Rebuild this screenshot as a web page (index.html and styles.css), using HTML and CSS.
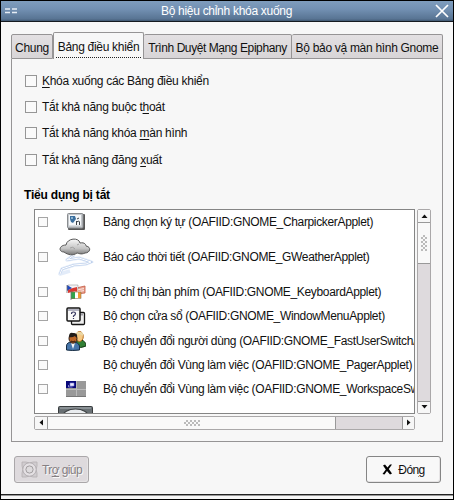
FILE: index.html
```html
<!DOCTYPE html>
<html lang="vi">
<head>
<meta charset="utf-8">
<title>Bộ hiệu chỉnh khóa xuống</title>
<link rel="stylesheet" href="styles.css">
</head>
<body>
<div class="window">
  <header class="titlebar">
    <svg class="menu" width="13" height="6" viewBox="0 0 13 6"><path d="M0 1h5M7 1h5M0 4.500h5M7 4.500h5" stroke="#e6edf5" stroke-width="1.300"/></svg>
    <h1><span>Bộ hiệu chỉnh khóa xuống</span></h1>
    <svg class="close" width="14" height="14" viewBox="0 0 14 14"><path d="M1 1 13 13M13 1 1 13" stroke="#fff" stroke-width="1.700"/></svg>
  </header>
  <main class="content">
    <nav class="tabs">
      <div class="tab t1"><span>Chung</span></div>
      <div class="tab t2 active"><span>Bảng điều khiển</span></div>
      <div class="tab t3"><span>Trình Duyệt Mạng Epiphany</span></div>
      <div class="tab t4"><span>Bộ bảo vậ màn hình Gnome</span></div>
    </nav>
    <section class="panel">
      <div class="option"><i class="box"></i><span><u>K</u>hóa xuống các Bảng điều khiển</span></div>
      <div class="option"><i class="box"></i><span>Tắt khả năng buộc t<u>h</u>oát</span></div>
      <div class="option"><i class="box"></i><span>Tắt khả năng khóa <u>m</u>àn hình</span></div>
      <div class="option"><i class="box"></i><span>Tắt khả năng đăng <u>x</u>uất</span></div>
      <h2><span>Tiểu dụng bị tắt</span></h2>
      <div class="scroller">
        <div class="list">
          <div class="row"><i class="box small"></i><div class="icon">
            <svg width="18" height="17" viewBox="0 0 18 17"><rect x="1" y="1" width="17" height="16" rx="1" fill="#555"/><rect x=".5" y=".5" width="15.500" height="14.500" rx="1" fill="#c4c8cc" stroke="#8a8d90"/><rect x="2" y="2" width="12" height="10.500" fill="#f5f7f9"/><path d="M3 3h5l1 3-3 4-2-1-1-3z" fill="#3b6f9e"/><path d="M4 4h2v2H4z" fill="#8db5d2"/><path d="M9.500 12V8M9.500 9q3-2 3 0v3M10 6l2-1" stroke="#3c4248" fill="none"/></svg>
          </div><span>Bảng chọn ký tự (OAFIID:GNOME_CharpickerApplet)</span></div>
          <div class="row tall"><i class="box small"></i><div class="icon">
            <svg width="36" height="38" viewBox="0 0 36 38"><defs><linearGradient id="cloud" x2="0" y2="1"><stop offset="0" stop-color="#f8f8f8"/><stop offset=".6" stop-color="#c4c4c4"/><stop offset="1" stop-color="#777"/></linearGradient></defs><path d="M16 17 9 22 21 20 33 24 28 26 16 27 4 31 2 36 12 33" fill="none" stroke="#e3ecf9" stroke-width="3.500" stroke-linejoin="round"/><path d="M16 17 9 22 21 20 33 24 28 26 16 27 4 31 2 36" fill="none" stroke="#b9ccea" stroke-width="2"/><path d="M16 17 9 22 21 20 33 24 28 26 16 27 4 31 2 36" fill="none" stroke="#fff" stroke-width="1"/><path d="M6 14C0 14 1 7 8 7c1-7 13-8 14-2 5-1 6 2 6 3 6 1 4 7-1 7-4 2-7 0-8 0-4 3-9 2-13-1z" fill="url(#cloud)" stroke="#585858"/><path d="M12 10q3-2 5 1M21 6l-2 1" fill="none" stroke="#949494" stroke-width=".8"/></svg>
          </div><span>Báo cáo thời tiết (OAFIID:GNOME_GWeatherApplet)</span></div>
          <div class="row"><i class="box small"></i><div class="icon">
            <svg width="20" height="16" viewBox="0 0 20 16"><path d="M10 4 19 2v7l-9 1z" fill="#e9a492" stroke="#c3573f" stroke-width=".8"/><path d="M11 6 18 4.500M11 8l7-1.500" stroke="#fff" stroke-width=".7"/><path d="M2 1h10v4H2z" fill="#f4f4f6" stroke="#888" stroke-width=".5"/><path d="M1 1 6 4 1 7z" fill="#214ac0"/><path d="M2 9V6l5-2 4-1v4L6 8z" fill="#d83832"/><path d="M5 8h4v7H5z" fill="#30a44b"/><path d="M9 8h3v7H9z" fill="#fff"/><path d="M12 8h3v6h-3z" fill="#f19b31"/><path d="M5 8h10v6.500H5" fill="none" stroke="#8a7350" stroke-width=".6"/><path d="M1 1v8M5 7v9" stroke="#727272" stroke-width=".8"/></svg>
          </div><span>Bộ chỉ thị bàn phím (OAFIID:GNOME_KeyboardApplet)</span></div>
          <div class="row"><i class="box small"></i><div class="icon">
            <svg width="20" height="20" viewBox="0 0 20 20"><rect x="5.500" y="6.500" width="13" height="12" rx="1" fill="#eee" stroke="#151515" stroke-width="1.300"/><path d="M7 8.500h10" stroke="#a0a0a8" stroke-width="2"/><rect x="1" y="2" width="13" height="13" rx="1" fill="#f9f9f9" stroke="#151515" stroke-width="1.500"/><path d="M2 4h11" stroke="#9c9caf" stroke-width="1.500"/><path d="M5.500 8q0-2 2-2t2 1.500Q9.500 9 7.500 10v1M7.500 12v1" fill="none" stroke="#34345e" stroke-width="1.200"/></svg>
          </div><span>Bộ chọn cửa sổ (OAFIID:GNOME_WindowMenuApplet)</span></div>
          <div class="row"><i class="box small"></i><div class="icon">
            <svg width="20" height="20" viewBox="0 0 20 20"><path d="M9 15q0-6 6-6 5 1 5 6-5 3-11 0z" fill="#328035" stroke="#173b19"/><ellipse cx="13.500" cy="5.500" rx="3.800" ry="5" fill="#f5c983" stroke="#b66c1e"/><path d="M10 4q0-4 4-3 4 0 3 4-3-3-7-1z" fill="#ead7a5"/><path d="M.5 19v-4q0-4 6-4t7 4v4q-7 1-13 0z" fill="#4776aa" stroke="#172c42"/><path d="m5 12 2 6 2-6z" fill="#f8f8f8"/><ellipse cx="7" cy="7.500" rx="4" ry="4.700" fill="#bb6527" stroke="#2a1b13"/><path d="M3 6q0-5 4-4 5 0 4 4-1 1-2-1-3 2-6 1z" fill="#211c19"/><path d="M5 10q2 2 4 0" stroke="#301609" fill="none"/></svg>
          </div><span>Bộ chuyển đổi người dùng (OAFIID:GNOME_FastUserSwitchApplet)</span></div>
          <div class="row"><i class="box small"></i><div class="icon"></div><span>Bộ chuyển đổi Vùng làm việc (OAFIID:GNOME_PagerApplet)</span></div>
          <div class="row"><i class="box small"></i><div class="icon">
            <svg width="20" height="16" viewBox="0 0 20 16"><path d="M0 0h20v16H0z" fill="#999"/><path d="M10.500 0v16M0 8.500h20" stroke="#bbb"/><path d="M0 0h10v7H0z" fill="#080878"/><path d="M4 2h4v3H4z" fill="#eef" stroke="#8080e0" stroke-width=".6"/><path d="M2.500 4v2h4" stroke="#b0b0ef" fill="none" stroke-width=".7"/><path d="M0 15.500h20" stroke="#777"/></svg>
          </div><span>Bộ chuyển đổi Vùng làm việc (OAFIID:GNOME_WorkspaceSwitcherApplet)</span></div>
          <div class="row last"><i class="gap"></i><div class="icon">
            <svg width="35" height="20" viewBox="0 0 35 20"><rect x=".5" y=".5" width="34" height="19" rx="1" fill="#697074" stroke="#383c3e"/><path d="M2 2h31" stroke="#969da0" stroke-width="1.500"/><ellipse cx="17.500" cy="11" rx="13" ry="8" fill="#e9ecef" stroke="#3d4143" stroke-width="1.200"/></svg>
          </div></div>
        </div>
        <div class="vbar">
          <div class="arrow"><svg width="7" height="4" viewBox="0 0 7 4"><path d="M.5 4 3.500.500l3 3.500z" fill="#111"/></svg></div>
          <div class="vthumb"><i class="grip"></i></div>
          <div class="arrow end"><svg width="7" height="4" viewBox="0 0 7 4"><path d="M.5 0h6l-3 3.500z" fill="#111"/></svg></div>
        </div>
        <div class="hbar">
          <div class="arrow"><svg width="4" height="7" viewBox="0 0 4 7"><path d="M4 .5v6l-3.500-3z" fill="#111"/></svg></div>
          <div class="hthumb"><i class="grip"></i></div>
          <div class="arrow end"><svg width="4" height="7" viewBox="0 0 4 7"><path d="M0 .5 3.500 3.500 0 6.500z" fill="#111"/></svg></div>
        </div>
      </div>
    </section>
    <footer class="actions">
      <div class="button disabled"><svg width="17" height="17" viewBox="0 0 17 17"><path d="M1 1h4l3.500 1L12 1h4v4l-1 3.500L16 12v4h-4l-3.500-1L5 16H1v-4l1-3.500L1 5z" fill="#d0cccf" stroke="#b5b0b3" stroke-width=".8"/><circle cx="8.500" cy="8.500" r="5.200" fill="none" stroke="#e4e0e3" stroke-width="3"/><circle cx="8.500" cy="8.500" r="6.700" fill="none" stroke="#aaa5a8" stroke-width=".8"/><circle cx="8.500" cy="8.500" r="3.600" fill="#dedbdd" stroke="#a39fa1"/></svg><span>Tr<u>ợ</u> giúp</span></div>
      <div class="button"><svg width="11" height="11" viewBox="0 0 11 11"><path d="M1 1.500 3 .500 5.500 3.500 8 .500h2L6.800 5 10 9.500 8 10.500 5 7 2.500 10.500.500 10 3.800 5.500z" fill="#000"/></svg><span>Đón<u>g</u></span></div>
    </footer>
  </main>
</div>
</body>
</html>
```
FILE: styles.css
```css
* { box-sizing: border-box; }
body {
  margin: 0;
  font: 12px/16px "Liberation Sans", Arial, sans-serif;
  letter-spacing: -0.29px;
  color: #111;
  background: #000;
}
svg { display: block; flex: none; }
span { white-space: nowrap; }
u { text-underline-offset: 2px; text-decoration-thickness: 1px; }
.window {
  display: flex;
  flex-direction: column;
  width: 454px;
  height: 500px;
  border: 1px solid #000;
  background: #f7f7f7;
}
.titlebar {
  display: flex;
  align-items: center;
  flex: none;
  height: 21px;
  padding: 0 4px;
  border-bottom: 1px solid #151a20;
  background: linear-gradient(#7f9dbd, #7391b3 40%, #587493 90%, #3f566f);
}
.titlebar h1 {
  display: flex;
  flex: 1;
  justify-content: center;
  margin: 0;
  font-size: 12px;
  font-weight: normal;
  color: #fff;
}
.content {
  flex: 1;
  min-height: 0;
  margin-bottom: 4px;
  padding: 10px 10px 0;
  border-bottom: 1px solid #222;
  box-shadow: 0 1px #999;
}
.tabs { display: flex; align-items: flex-end; height: 27px; }
.tab {
  display: flex;
  align-items: center;
  justify-content: center;
  height: 25px;
  padding-top: 3px;
  border: 1px solid #969495;
  border-left-width: 0;
  border-radius: 2px 2px 0 0;
  background: linear-gradient(#e3e0e2, #d8d5d7);
  letter-spacing: -0.3px;
}
.t1 { width: 42px; border-left-width: 1px; }
.t2 { width: 91px; }
.t3 { width: 148px; letter-spacing: -0.42px; }
.t4 { width: 151px; }
.tab.active {
  height: 27px;
  padding: 0;
  border-left-width: 1px;
  border-bottom: 0;
  background: #f7f7f7;
}
.active span { padding: 4px 2px 2px; border-bottom: 1px dotted #222; }
.panel {
  width: 432px;
  height: 383px;
  padding: 9px 11px 0 12px;
  border: 1px solid #969495;
  border-top: 0;
}
.option { display: flex; align-items: center; gap: 5px; height: 26.2px; padding-left: 1px; }
.box { flex: none; width: 12px; height: 12px; border: 1px solid #969696; background: #fafafa; }
.small { width: 10px; height: 10px; border-color: #a5a5a5; }
h2 { margin: 14px 0 6px; font-size: 12px; line-height: 16px; letter-spacing: -0.2px; display: flex; color: #000; }
.scroller {
  display: grid;
  grid-template: 205px 14px / 381px 14px;
  gap: 2px;
  margin-left: 10px;
}
.list { overflow: hidden; border: 1px solid #858585; background: #fff; letter-spacing: -0.34px; }
.row { display: flex; align-items: center; height: 24.3px; padding-left: 3px; }
.tall { height: 46px; }
.last { height: 38px; align-items: flex-start; padding-top: 4px; }
.gap { width: 10px; flex: none; }
.icon { display: flex; justify-content: center; flex: none; width: 55px; }
.vbar, .hbar { display: flex; border: 1px solid #aaa8a9; border-radius: 2px; background: #dedadd; }
.vbar { flex-direction: column; }
.arrow {
  display: flex;
  align-items: center;
  justify-content: center;
  flex: none;
  width: 12px;
  height: 12px;
  background: #f7f7f7;
}
.end { margin-top: auto; border-top: 1px solid #999; }
.hbar .end { margin: 0 0 0 auto; border: 0; border-left: 1px solid #999; }
.vthumb, .hthumb {
  display: flex;
  align-items: center;
  justify-content: center;
  border: solid #999;
  background: #f9f9f9;
}
.vthumb { height: 42px; border-width: 1px 0; }
.hthumb { width: 289px; border-width: 0 1px; }
.grip {
  width: 6px;
  height: 16px;
  background: repeating-conic-gradient(#bbb 0 25%, #f9f9f9 0 50%) 0 0 / 4px 4px;
}
.hthumb .grip { width: 16px; height: 6px; }
.actions { display: flex; justify-content: space-between; padding: 14px 2px 0 3px; }
.button {
  display: flex;
  align-items: center;
  justify-content: center;
  gap: 5px;
  width: 75px;
  height: 27px;
  border: 1px solid #858585;
  border-radius: 3px;
  background: #f8f8f8;
  box-shadow: inset -1px -1px #e6e4e5;
  letter-spacing: -0.6px;
}
.disabled { border-color: #aaa7a9; background: #dedadd; color: #858083; gap: 4px; text-shadow: 1px 1px #fafafa; }
```
